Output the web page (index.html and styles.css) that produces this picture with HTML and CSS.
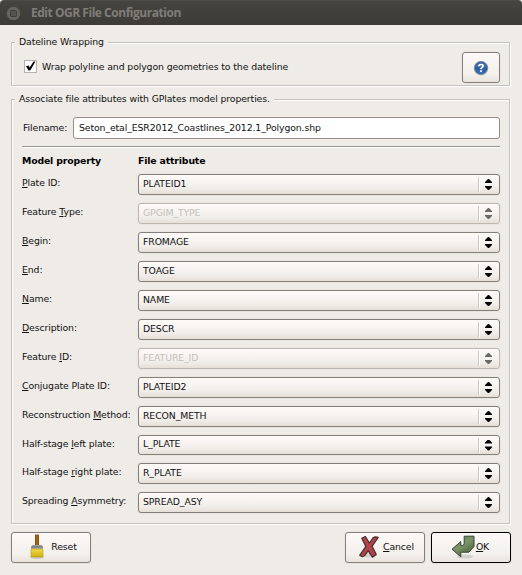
FILE: index.html
```html
<!DOCTYPE html>
<html lang="en">
<head>
<meta charset="utf-8">
<title>Edit OGR File Configuration</title>
<link rel="stylesheet" href="styles.css">
</head>
<body>
<div class="dialog">
  <header class="titlebar">
    <svg class="close" width="15" height="15" viewBox="0 0 15 15"><circle cx="7.5" cy="7.5" r="6.7" fill="#66645f"/><rect x="4.5" y="4.5" width="6" height="6" rx="1" fill="#55534e" stroke="#403e3a"/></svg>
    <h1>Edit OGR File Configuration</h1>
  </header>
  <main class="content">
    <section class="group wrapping">
      <h2 class="legend">Dateline Wrapping</h2>
      <div class="wrap-row">
        <label class="check">
          <svg class="box" width="13" height="13" viewBox="0 0 13 13"><rect x=".5" y=".5" width="12" height="12" fill="#fff" stroke="#b5b0aa"/><path d="M2 6.2 4.7 5.6 5.6 7.6 9.6 1.6 11.4 1.4 6.4 10.2 4.5 10.4Z" fill="#000"/></svg>
          <span>Wrap polyline and polygon geometries to the dateline</span>
        </label>
        <button class="button help" aria-label="Help">
          <svg width="16" height="16" viewBox="0 0 16 16"><defs><radialGradient id="blue" cx=".5" cy=".8" r=".8"><stop offset="0" stop-color="#3974b8"/><stop offset="1" stop-color="#1d4584"/></radialGradient></defs><circle cx="8" cy="8.2" r="7.3" fill="#b9b7b2"/><circle cx="8" cy="8" r="6.5" fill="url(#blue)" stroke="#7389ac" stroke-width=".8"/><path d="M2.5 7.5A5.5 5.5 0 0 1 13.5 7.5Q8 6 2.5 7.5Z" fill="#7196c7" opacity=".4"/><path d="M5.9 6.2Q5.9 4.5 8 4.5T10.1 6Q10.1 7 8.8 7.7 8 8.2 8 9.2M8 10.3V12" fill="none" stroke="#fff" stroke-width="1.7"/></svg>
        </button>
      </div>
    </section>

    <section class="group mapping">
      <h2 class="legend">Associate file attributes with GPlates model properties.</h2>
      <div class="file-row">
        <label for="filename">Filename:</label>
        <input id="filename" value="Seton_etal_ESR2012_Coastlines_2012.1_Polygon.shp">
      </div>
      <div class="rule"></div>
      <div class="row head"><b>Model property</b><b>File attribute</b></div>
      <div class="rows">
        <div class="row"><span><u>P</u>late ID:</span><div class="combo">PLATEID1<i></i></div></div>
        <div class="row"><span>Feature <u>T</u>ype:</span><div class="combo disabled">GPGIM_TYPE<i></i></div></div>
        <div class="row"><span><u>B</u>egin:</span><div class="combo">FROMAGE<i></i></div></div>
        <div class="row"><span><u>E</u>nd:</span><div class="combo">TOAGE<i></i></div></div>
        <div class="row"><span><u>N</u>ame:</span><div class="combo">NAME<i></i></div></div>
        <div class="row"><span><u>D</u>escription:</span><div class="combo">DESCR<i></i></div></div>
        <div class="row"><span>Feature <u>I</u>D:</span><div class="combo disabled">FEATURE_ID<i></i></div></div>
        <div class="row"><span><u>C</u>onjugate Plate ID:</span><div class="combo">PLATEID2<i></i></div></div>
        <div class="row"><span>Reconstruction <u>M</u>ethod:</span><div class="combo">RECON_METH<i></i></div></div>
        <div class="row short"><span>Half-stage <u>l</u>eft plate:</span><div class="combo">L_PLATE<i></i></div></div>
        <div class="row"><span>Half-stage <u>r</u>ight plate:</span><div class="combo">R_PLATE<i></i></div></div>
        <div class="row"><span>Spreading <u>A</u>symmetry:</span><div class="combo">SPREAD_ASY<i></i></div></div>
      </div>
    </section>

    <footer class="actions">
      <button class="button reset">
        <svg width="14" height="25" viewBox="0 0 14 25"><defs><linearGradient id="wood"><stop offset="0" stop-color="#7b4b0d"/><stop offset=".5" stop-color="#a8691c"/><stop offset="1" stop-color="#7b4b0d"/></linearGradient><linearGradient id="bristle" x2="0" y2="1"><stop offset="0" stop-color="#f2dd45"/><stop offset="1" stop-color="#cfad12"/></linearGradient><linearGradient id="metal" x2="0" y2="1"><stop offset="0" stop-color="#aaa"/><stop offset=".5" stop-color="#777"/><stop offset="1" stop-color="#bbb"/></linearGradient></defs><ellipse cx="7" cy="23.6" rx="7" ry="1.3" fill="#cbc9c4"/><rect x="5" y=".5" width="4" height="11" fill="url(#wood)"/><path d="M1 12.5 2.5 11H11.5L13 12.5V15H1Z" fill="url(#metal)"/><path d="M1 15H13V23H1Z" fill="url(#bristle)" stroke="#b79a1c" stroke-width=".6"/></svg>
        <span>Reset</span>
      </button>
      <button class="button cancel">
        <svg width="20" height="24" viewBox="0 0 20 24"><ellipse cx="9" cy="20" rx="9" ry="2.5" fill="#d4d1cc"/><path d="M2.8 3.2 6.4 1.5 10.4 8 14.4 2.4Q16.4 1.2 19.2 2.4L13 11.3 17.2 19.4 13.4 22.2 9.2 15.6 5.6 20.6Q3.4 22.6 .8 20.2L6.8 11.6Z" fill="#b3434b" stroke="#452c2e" stroke-width="1.2" stroke-linejoin="round"/></svg>
        <span><u>C</u>ancel</span>
      </button>
      <button class="button ok">
        <svg width="24" height="24" viewBox="0 0 24 24"><defs><linearGradient id="green" x2=".7" y2="1"><stop offset="0" stop-color="#58734a"/><stop offset=".5" stop-color="#7d9468"/><stop offset="1" stop-color="#486239"/></linearGradient></defs><ellipse cx="14" cy="21.5" rx="8" ry="2" fill="#d1cfca"/><path d="M13.2 1.2H23V11.5L17.8 17.2H9.8V21.8L1 14.2 9.8 6.6V10.6H11.8L13.2 9Z" fill="url(#green)" stroke="#354332" stroke-width="1" stroke-linejoin="round"/></svg>
        <span><u>O</u>K</span>
      </button>
    </footer>
  </main>
</div>
</body>
</html>
```
FILE: styles.css
```css
* { box-sizing: border-box; }
body {
  margin: 0;
  background: #efebe7;
  color: #111;
  font: 9.33px/12px "DejaVu Sans", sans-serif;
  letter-spacing: -0.11px;
}
.dialog { width: 522px; height: 575px; background: #efebe7; }
.titlebar {
  height: 25px;
  padding-left: 6px;
  display: flex;
  align-items: center;
  gap: 10px;
  border-radius: 4px 4px 0 0;
  border-top: 1px solid #4c4b46;
  background: linear-gradient(#45443f, #3c3b37);
}
h1 {
  margin: 0;
  color: #807d78;
  font: 700 12px/16px "Open Sans", sans-serif;
  letter-spacing: -0.47px;
}
.content { padding: 17px 12px 0 11px; }
.group {
  border: 1px solid #c5c2be;
  box-shadow: 1px 1px 0 #fff, inset 1px 1px 0 #fff;
  padding: 0 9px 0 10px;
}
.legend {
  width: fit-content;
  margin: -7px 0 0 -7px;
  padding: 0 4px;
  background: #efebe7;
  font: inherit;
}
.wrapping { height: 44px; }
.wrap-row { display: flex; justify-content: space-between; padding-top: 4px; }
.check { display: flex; align-items: center; gap: 5px; padding-left: 2px; height: 29px; }
.button {
  display: flex;
  align-items: center;
  justify-content: center;
  height: 31px;
  padding: 0;
  border: 1px solid #857f7a;
  border-radius: 3px;
  background: linear-gradient(#fbf8f6, #f4f1ed 70%, #e9e3dd);
  box-shadow: 0 0 0 1px #e9e5e1;
  color: inherit;
  font: inherit;
  letter-spacing: inherit;
}
.button span { padding-bottom: 2px; }
.actions svg { margin-bottom: 2px; }
.help { width: 38px; }
.mapping { margin-top: 13px; height: 425px; }
.file-row { display: flex; align-items: center; justify-content: space-between; padding: 12px 0 0 1px; }
.file-row input {
  width: 427px;
  height: 22px;
  padding: 0 5px 1px;
  border: 1px solid #968e87;
  border-radius: 3px;
  background: #fff;
  color: inherit;
  font: inherit;
  letter-spacing: inherit;
}
.rule { margin-top: 7px; height: 2px; background: #fff; border-top: 1px solid #979590; }
.row { display: grid; grid-template-columns: 116px 1fr; height: 21px; white-space: nowrap; }
.row > span { padding-top: 3px; }
.head { height: 12px; margin-top: 7px; color: #000; letter-spacing: -0.15px; }
.rows { display: grid; gap: 8px; margin-top: 7px; }
.combo {
  display: flex;
  align-items: center;
  justify-content: space-between;
  padding: 0 6px 2px 4px;
  border: 1px solid #857f7a;
  border-radius: 3px;
  background: linear-gradient(#fdfaf8, #f2efeb 65%, #e6dfd8);
  box-shadow: 0 0 0 1px #e9e5e1;
}
.short { height: 20px; }
.combo i {
  display: flex;
  width: 15px;
  height: 15px;
  margin-bottom: -2px;
  border-left: 1px solid #cbc7c2;
  box-shadow: inset 1px 0 0 #fff;
}
.combo i::before {
  content: "";
  width: 7px;
  height: 11px;
  margin: 2px 0 0 6px;
  background: #000;
  clip-path: polygon(3px 0, 4px 0, 7px 3px, 7px 4px, 0 4px, 0 3px, 3px 0, 3px 11px, 0 8px, 0 7px, 7px 7px, 7px 8px, 4px 11px, 3px 11px);
}
.disabled { color: #c3bfbb; border-color: #bcb7b2; }
.disabled i::before { background: #6b6966; }
u { text-decoration: underline 1px; text-underline-offset: 1px; text-decoration-skip-ink: none; }
.actions { display: flex; margin: 8px -1px 0 0; }
.reset, .cancel, .ok { width: 80px; }
.reset { gap: 7px; padding-left: 5px; }
.cancel { margin-left: auto; gap: 4px; padding-left: 3px; }
.ok { margin-left: 6px; gap: 1px; padding-right: 2px; border-color: #000; }
```
